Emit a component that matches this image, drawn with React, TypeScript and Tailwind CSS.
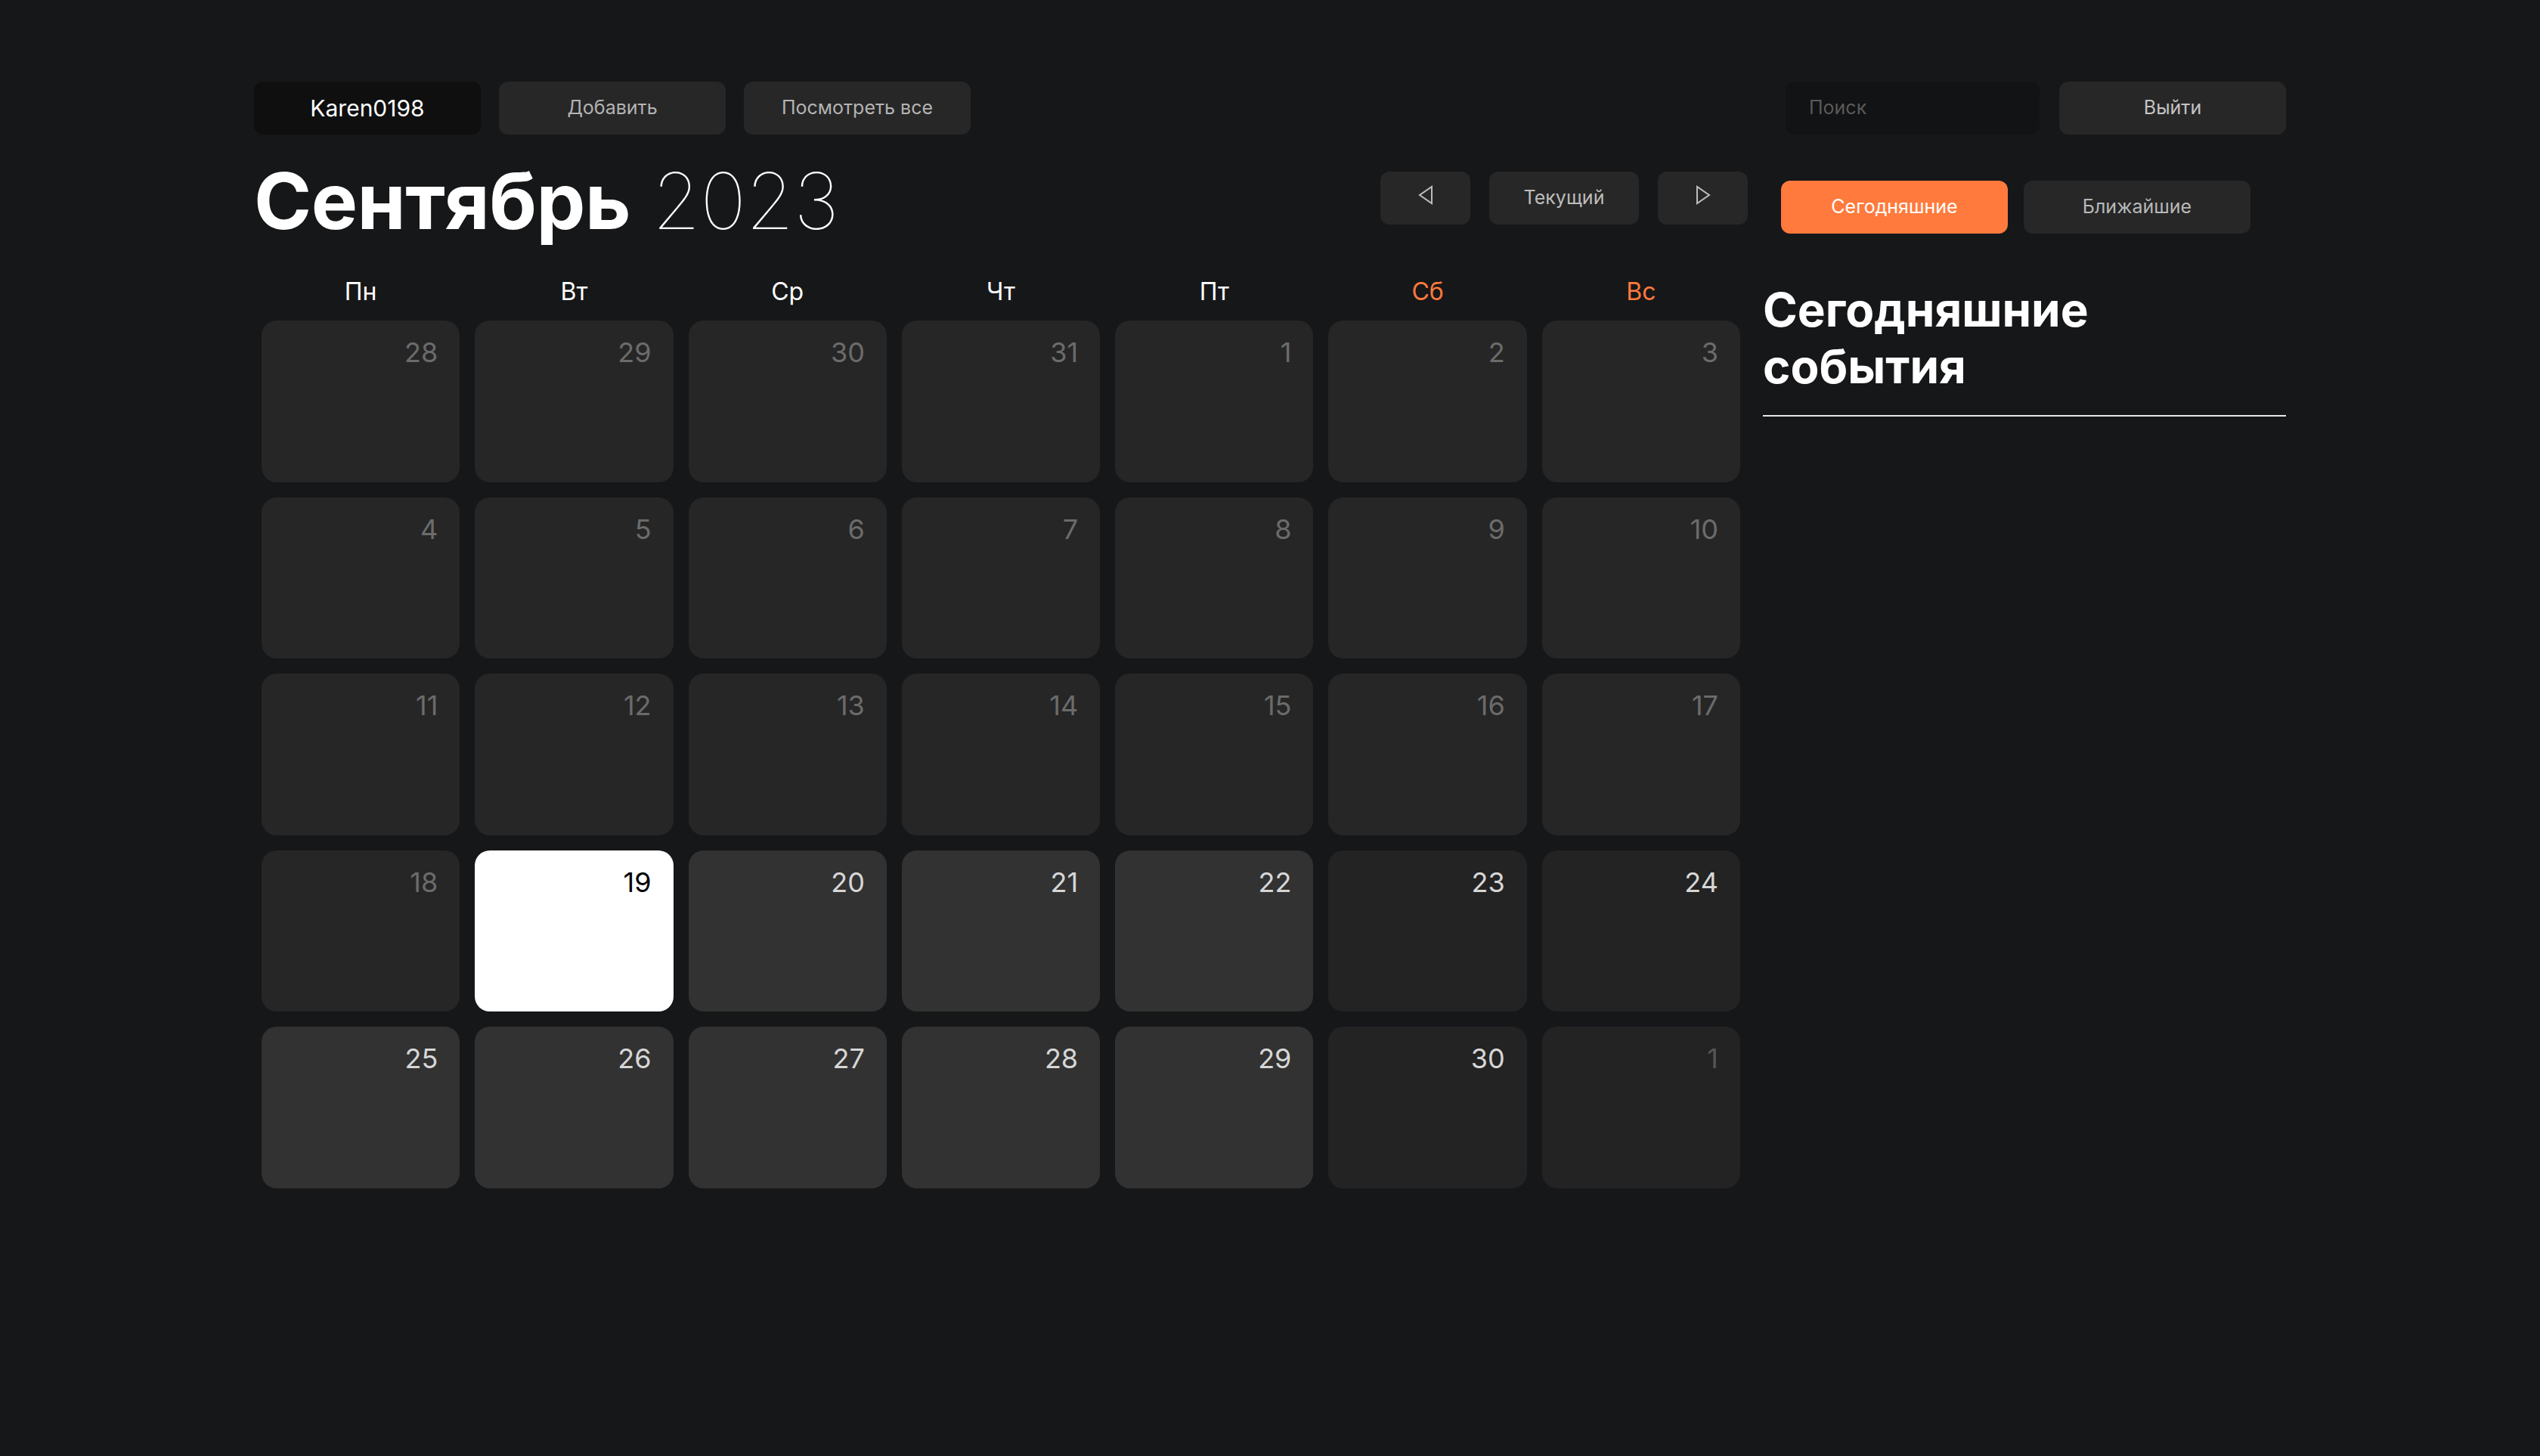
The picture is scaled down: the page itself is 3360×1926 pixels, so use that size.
import React from "react";

type Cell = { n: number; kind: "past" | "today" | "future" | "weekend" | "other" };

const weeks: Cell[][] = [
  [28, 29, 30, 31, 1, 2, 3].map((n) => ({ n, kind: "past" as const })),
  [4, 5, 6, 7, 8, 9, 10].map((n) => ({ n, kind: "past" as const })),
  [11, 12, 13, 14, 15, 16, 17].map((n) => ({ n, kind: "past" as const })),
  [
    { n: 18, kind: "past" },
    { n: 19, kind: "today" },
    { n: 20, kind: "future" },
    { n: 21, kind: "future" },
    { n: 22, kind: "future" },
    { n: 23, kind: "weekend" },
    { n: 24, kind: "weekend" },
  ],
  [
    { n: 25, kind: "future" },
    { n: 26, kind: "future" },
    { n: 27, kind: "future" },
    { n: 28, kind: "future" },
    { n: 29, kind: "future" },
    { n: 30, kind: "weekend" },
    { n: 1, kind: "other" },
  ],
];

const cellBg: Record<Cell["kind"], string> = {
  past: "bg-[#262626] text-[#6b6b6b]",
  today: "bg-white text-black",
  future: "bg-[#323232] text-[#d6d6d6]",
  weekend: "bg-[#232323] text-[#d6d6d6]",
  other: "bg-[#232323] text-[#555555]",
};

const days = ["Пн", "Вт", "Ср", "Чт", "Пт", "Сб", "Вс"];

function Btn({ children, className = "" }: { children: React.ReactNode; className?: string }) {
  return (
    <div
      className={
        "flex h-[70px] items-center justify-center rounded-[12px] text-[25px] " + className
      }
    >
      {children}
    </div>
  );
}

export default function App() {
  return (
    <div className="min-h-screen bg-[#161719] font-['Inter','Noto_Sans',sans-serif]">
      <div className="mx-auto w-[2688px] pt-[108px]">
        <header className="flex justify-between">
          <div className="flex gap-6">
            <Btn className="w-[300px] bg-[#0f0f10] text-[30px] text-white">Karen0198</Btn>
            <Btn className="w-[300px] bg-[#272727] text-[#b4b4b4]">Добавить</Btn>
            <Btn className="w-[300px] bg-[#272727] text-[#b4b4b4]">Посмотреть все</Btn>
          </div>
          <div className="flex gap-[26px]">
            <div className="flex h-[70px] w-[336px] items-center rounded-[12px] bg-[#121314] pl-[31px] text-[25px] text-[#5a5a5a]">
              Поиск
            </div>
            <Btn className="w-[300px] bg-[#272727] text-[#c4c4c4]">Выйти</Btn>
          </div>
        </header>

        <div className="flex gap-5">
          <main className="w-[1976px]">
            <div className="flex items-start justify-between">
              <h1 className="mt-[36px] text-[103px] leading-none tracking-[-0.5px] text-white">
                <span className="font-bold">Сентябрь</span>{" "}
                <span className="font-thin">2023</span>
              </h1>
              <div className="mt-[49px] flex gap-[25px]">
                <Btn className="w-[119px] bg-[#272727]">
                  <svg width="22" height="26" viewBox="0 0 22 26" className="-mt-[8px]">
                    <polygon
                      points="19,2 19,24 3,13"
                      fill="none"
                      stroke="#bdbdbd"
                      strokeWidth="2"
                      strokeLinejoin="miter"
                    />
                  </svg>
                </Btn>
                <Btn className="w-[198px] bg-[#272727] text-[#bdbdbd]">Текущий</Btn>
                <Btn className="w-[119px] bg-[#272727]">
                  <svg width="22" height="26" viewBox="0 0 22 26" className="-mt-[8px]">
                    <polygon
                      points="3,2 3,24 19,13"
                      fill="none"
                      stroke="#bdbdbd"
                      strokeWidth="2"
                      strokeLinejoin="miter"
                    />
                  </svg>
                </Btn>
              </div>
            </div>

            <div className="mt-[49px] grid grid-cols-7 gap-5 px-[10px]">
              {days.map((d, i) => (
                <div
                  key={d}
                  className={
                    "text-center text-[32px] leading-[40px] " +
                    (i >= 5 ? "text-[#ff7a3c]" : "text-white")
                  }
                >
                  {d}
                </div>
              ))}
            </div>

            <div className="mt-[18px] grid grid-cols-7 gap-5 px-[10px]">
              {weeks.flat().map((c, i) => (
                <div
                  key={i}
                  className={
                    "flex h-[213.5px] justify-end rounded-[20px] pr-[29px] pt-[24px] text-[36px] leading-none " +
                    cellBg[c.kind]
                  }
                >
                  {c.n}
                </div>
              ))}
            </div>
          </main>

          <aside className="w-[692px]">
            <div className="ml-[24px] mt-[61px] flex gap-[21px]">
              <Btn className="w-[300px] bg-[#ff7a3c] text-white">Сегодняшние</Btn>
              <Btn className="w-[300px] bg-[#272727] text-[#b8b8b8]">Ближайшие</Btn>
            </div>
            <h2 className="mt-[63px] text-[62px] font-bold leading-[75px] text-white">
              Сегодняшние
              <br />
              события
            </h2>
            <div className="mt-[27px] h-[2px] bg-[#e8e8e8]" />
          </aside>
        </div>
      </div>
    </div>
  );
}
